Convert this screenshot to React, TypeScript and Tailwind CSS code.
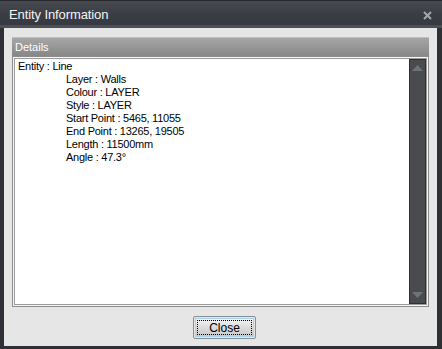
import React from "react";

const lines = [
  "Layer : Walls",
  "Colour : LAYER",
  "Style : LAYER",
  "Start Point : 5465, 11055",
  "End Point : 13265, 19505",
  "Length : 11500mm",
  "Angle : 47.3°",
];

export default function App() {
  return (
    <div
      className="w-[442px] h-[349px] bg-[#2e3035] flex flex-col overflow-hidden"
      style={{ fontFamily: '"Liberation Sans", Arial, sans-serif' }}
    >
      {/* Title bar */}
      <div className="h-[28px] shrink-0 border-t border-[#26282c] bg-gradient-to-b from-[#474a50] via-[#3a3d43] to-[#363940] flex items-center justify-between pl-[9px] pr-[10px] relative">
        <span className="text-[13px] text-[#f4f4f4] leading-none tracking-[-0.1px]">Entity Information</span>
        <svg width="9" height="9" viewBox="0 0 9 9" className="mt-[1px]">
          <path d="M1 1 L8 8 M8 1 L1 8" stroke="#a3a7ae" strokeWidth="2" />
        </svg>
        <div className="absolute left-0 right-0 bottom-0 h-[3px] bg-[#4c4f56]" />
      </div>
      {/* Body */}
      <div className="flex-1 ml-[4px] mr-[5px] mb-[3px] bg-[#e6e6e6] flex flex-col px-[7px] pt-[9px]">
        <div className="flex flex-col h-[270px] mx-[1px]">
          <div className="h-[19px] shrink-0 border-t border-[#c0c0c0] bg-gradient-to-b from-[#a6a6a6] to-[#878787] flex items-center pl-[3px]">
            <span className="text-[11px] text-white leading-none">Details</span>
          </div>
          <div className="flex-1 border border-[#8c8c8c] bg-[#f6f6f6] p-[1px]">
            <div className="w-full h-full bg-white border border-[#9a9a9a] flex">
              <div className="flex-1 pl-[3px] pt-[1px] text-[11px] text-black leading-[13px] tracking-[-0.25px]">
                <div>Entity : Line</div>
                {lines.map((l) => (
                  <div key={l} className="pl-[48px]">
                    {l}
                  </div>
                ))}
              </div>
              <div className="w-[17px] bg-[#4a4b4e] border border-[#2f3034] flex flex-col items-center justify-between py-[5px]">
                <svg width="11" height="6" viewBox="0 0 11 6">
                  <path d="M5.5 0 L11 6 L0 6 Z" fill="#6f7278" />
                </svg>
                <svg width="11" height="6" viewBox="0 0 11 6">
                  <path d="M0 0 L11 0 L5.5 6 Z" fill="#6f7278" />
                </svg>
              </div>
            </div>
          </div>
        </div>
        <div className="flex justify-center mt-[9px] pl-[8px]">
          <button className="w-[63px] h-[23px] border border-[#8a8d92] rounded-[2px] p-[1px] bg-[#e6e6e6]">
            <div className="w-full h-full border border-[#a9d4f0] bg-gradient-to-b from-[#f4f4f4] via-[#dcdcdc] to-[#c9c9c9] flex items-center justify-center">
              <div className="w-[55px] h-[15px] border border-dotted border-black flex items-center justify-center text-[12px] text-black leading-none">
                Close
              </div>
            </div>
          </button>
        </div>
      </div>
    </div>
  );
}
